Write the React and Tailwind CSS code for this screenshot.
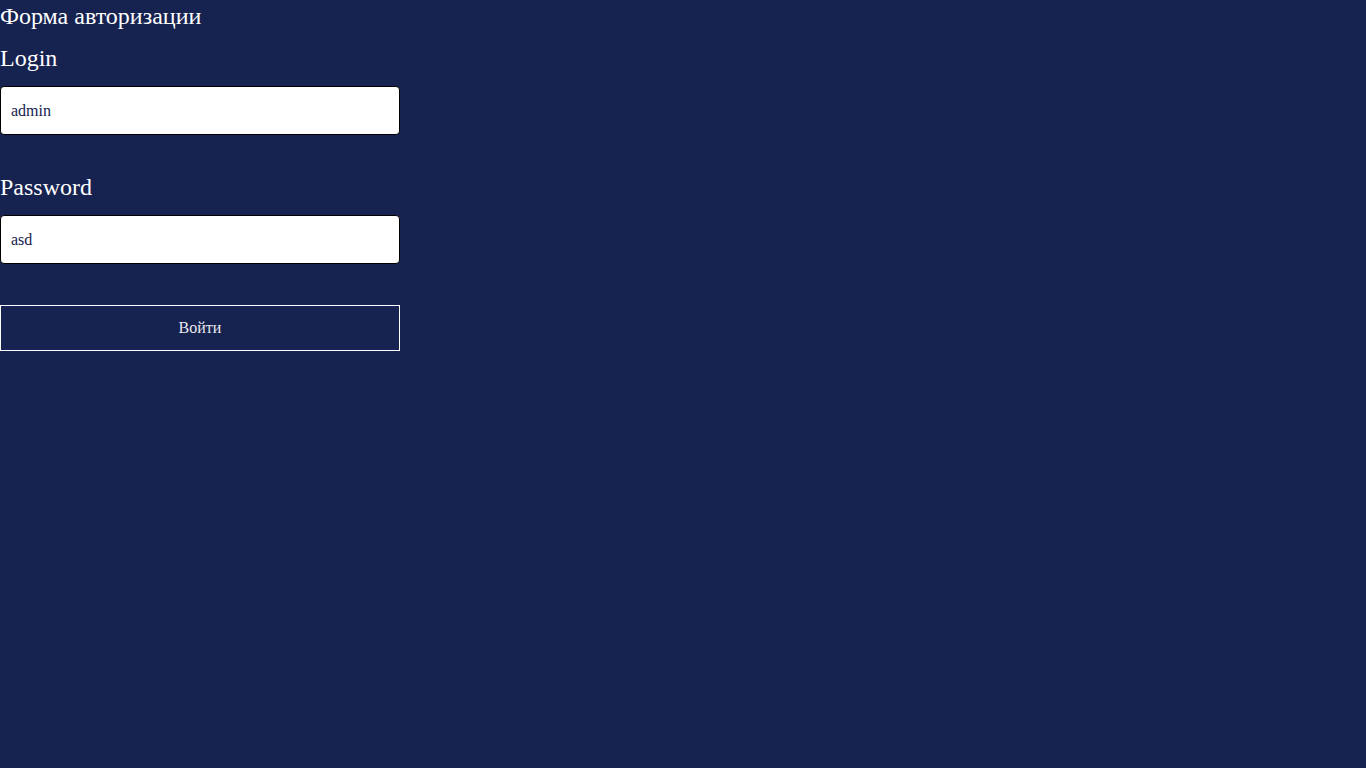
export default function App() {
  return (
    <div className="min-h-screen bg-[#16224f] text-white" style={{ fontFamily: '"Liberation Serif", "Times New Roman", serif' }}>
      <form className="flex w-[400px] flex-col" onSubmit={(e) => e.preventDefault()}>
        <div className="text-[24px] leading-[32px]">Форма авторизации</div>

        <label htmlFor="login" className="mt-[10px] block text-[24px] leading-[32px]">
          Login
        </label>
        <input
          id="login"
          type="text"
          defaultValue="admin"
          className="mt-[12px] h-[49px] w-full rounded-[4px] border border-black bg-white px-[10px] text-[16px] text-[#16224f] outline-none"
        />

        <label htmlFor="password" className="mt-[36px] block text-[24px] leading-[32px]">
          Password
        </label>
        <input
          id="password"
          type="text"
          defaultValue="asd"
          className="mt-[12px] h-[49px] w-full rounded-[4px] border border-black bg-white px-[10px] text-[16px] text-[#16224f] outline-none"
        />

        <button
          type="submit"
          className="mt-[41px] h-[46px] w-full border border-white bg-transparent text-[16px] text-[#e8e8ee]"
        >
          Войти
        </button>
      </form>
    </div>
  );
}
